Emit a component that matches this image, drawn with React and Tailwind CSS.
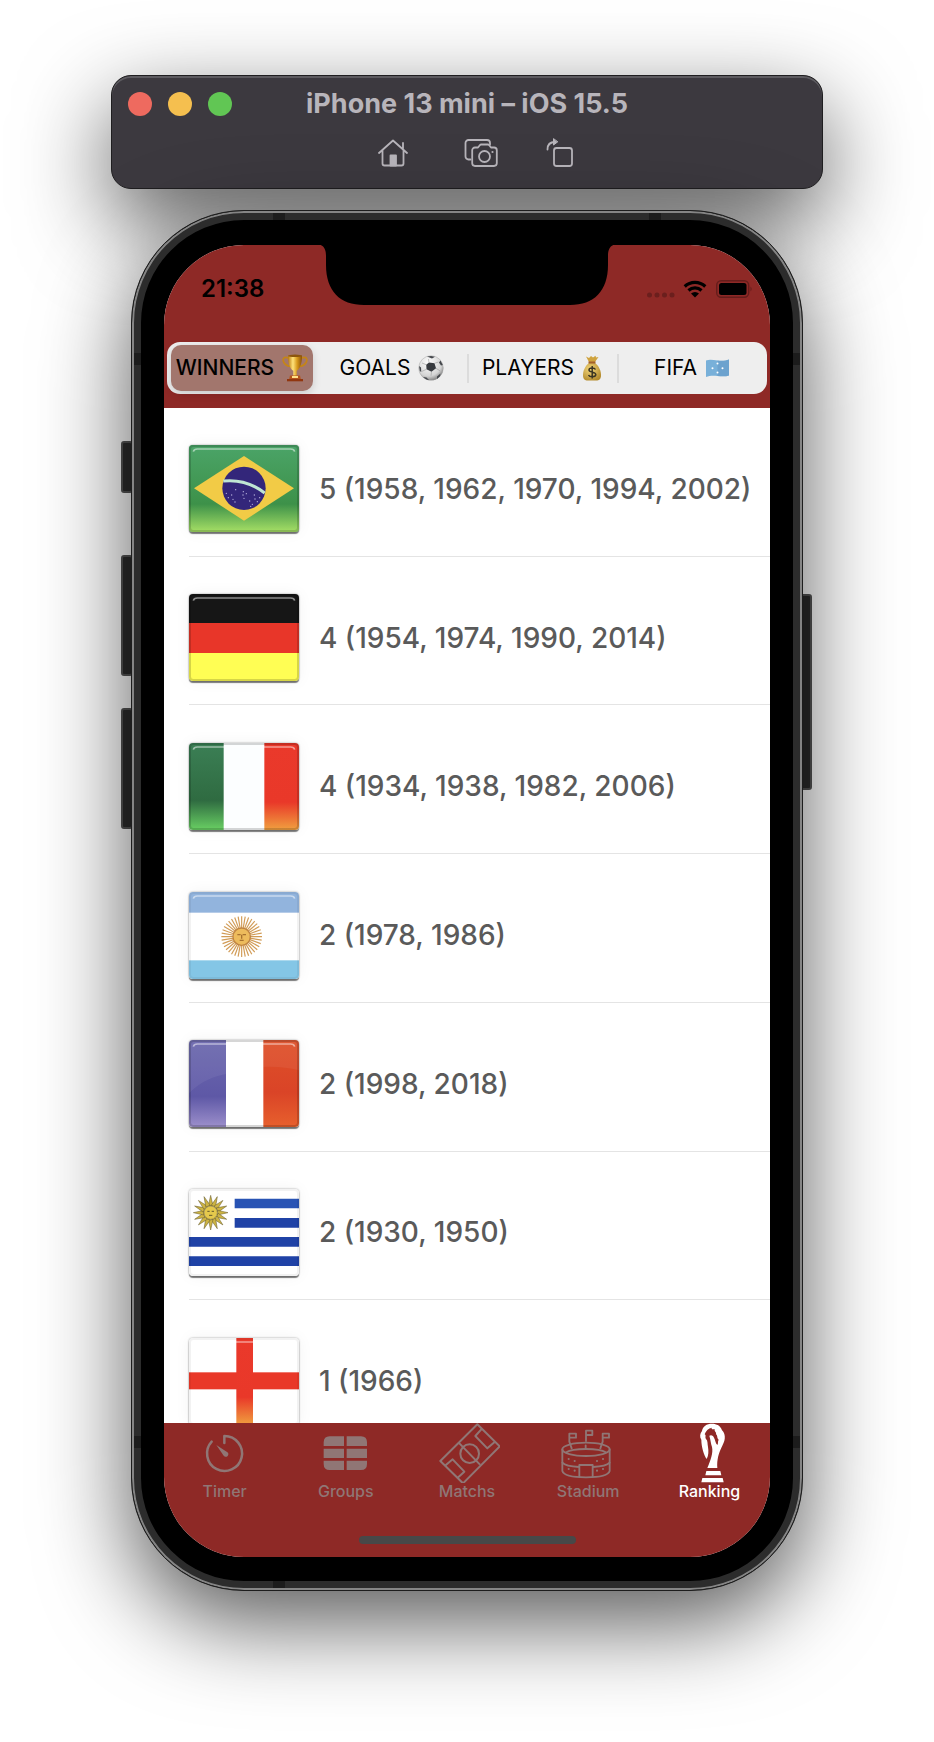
const FONT = "font-['Inter','Liberation_Sans',sans-serif]";

const HomeIcon = () => (
  <svg viewBox="0 0 30 28" className="h-7 w-[30px]" fill="none" stroke="currentColor" strokeWidth="1.8" strokeLinecap="round" strokeLinejoin="round">
    <path d="M1 14 15 1.500 29 14M4.500 11v13.500a2 2 0 0 0 2 2h17a2 2 0 0 0 2-2V11M25 9.500V4" />
    <path d="M12.500 16.500h5.500v10h-5.500z" fill="currentColor" />
  </svg>
);

const ShotsIcon = () => (
  <svg viewBox="0 0 34 28" className="h-7 w-[34px]" fill="none" stroke="currentColor" strokeWidth="1.8" strokeLinejoin="round" strokeLinecap="round">
    <path d="M6.500 20.500H4.500a3 3 0 0 1-3-3V4a3 3 0 0 1 3-3h18.500a3 3 0 0 1 3 3v1.500" />
    <path d="M11 8.500h3l1.800-2.300c.4-.5.700-.7 1.400-.7h6.600c.7 0 1 .2 1.400.7L27 8.500h3a2.800 2.800 0 0 1 2.800 2.800v13a2.800 2.800 0 0 1-2.800 2.700H11a2.800 2.800 0 0 1-2.800-2.700v-13A2.800 2.800 0 0 1 11 8.500Z" />
    <circle cx="20.500" cy="17.500" r="5.500" />
    <circle cx="28.500" cy="13" r="1.100" fill="currentColor" stroke="none" />
  </svg>
);

const RotateIcon = () => (
  <svg viewBox="0 0 28 30" className="h-[30px] w-7" fill="none" stroke="currentColor" strokeWidth="1.800" strokeLinejoin="round" strokeLinecap="round">
    <rect x="8" y="10" width="18" height="18" rx="2.500" />
    <path d="M1.500 11.500C1.500 6.500 4 4 9 4" />
    <path d="M7.500 1v6L11.500 4z" fill="currentColor" strokeWidth="1" />
  </svg>
);

const Trophy = () => (
  <svg viewBox="0 0 26 28" className="h-7 w-[26px]" aria-hidden="true">
    <defs>
      <linearGradient id="gold" x1="0" x2="1">
        <stop offset="0" stopColor="#b9770d" />
        <stop offset=".35" stopColor="#ffe27a" />
        <stop offset=".65" stopColor="#d89a1c" />
        <stop offset="1" stopColor="#8a4f08" />
      </linearGradient>
    </defs>
    <path d="M7 4.500C3 2 .8 4 1.200 6.500 1.700 9.800 5 12 9 12.500M19 4.500c4-2.500 6.200-.5 5.800 2-.5 3.300-3.800 5.500-7.800 6" fill="none" stroke="#c48518" strokeWidth="1.700" />
    <path d="M6 1.500h14c0 8-2 13.500-5.300 15.300V22h-3.400v-5.200C8 15 6 9.500 6 1.500Z" fill="url(#gold)" />
    <ellipse cx="13" cy="1.800" rx="7" ry="1.200" fill="#8d560d" />
    <path d="M8 21.500h10l.8 3.500H7.200z" fill="#b5541a" />
    <path d="M10 22h6v2h-6z" fill="#ffe08a" />
    <path d="M5 25h16v2.300H5z" fill="#91360f" />
  </svg>
);

const Ball = () => (
  <svg viewBox="0 0 26 28" className="h-7 w-[26px]" aria-hidden="true">
    <defs>
      <radialGradient id="ball" cx=".4" cy=".3" r=".75">
        <stop offset="0" stopColor="#fff" />
        <stop offset=".7" stopColor="#d4d4d4" />
        <stop offset="1" stopColor="#777" />
      </radialGradient>
    </defs>
    <circle cx="13" cy="14" r="12.300" fill="url(#ball)" stroke="#999" strokeWidth=".4" />
    <path d="m11 8.500 5.500.8 1.500 5-4.500 3.500-5-2.500-.3-4.600z" fill="#383b40" />
    <path d="M9 2.500 13 2l4 .8-3 1.700zM22.500 6.500l2.300 4.500-1.800.5-2-3zM1 12l2 1.500.3 4.500-1.500-1zM5 23l3.500.5 2.500 2.500c-2.500 0-4.500-1.500-6-3zM19 22.500l3.500-3-.5 2.800-3 2.700z" fill="#44474c" />
    <path d="M11 8.500 10.500 5M16.500 9.300 20.500 8M18 14.300l4 2.500M13.500 17.800l-.5 4M8.500 15.300l-4.500 2M8.200 10.700 4 9" stroke="#9a9a9a" strokeWidth=".6" />
  </svg>
);

const MoneyBag = () => (
  <svg viewBox="0 0 20 28" className="h-7 w-5" aria-hidden="true">
    <defs>
      <radialGradient id="bag" cx=".4" cy=".35" r=".7">
        <stop offset="0" stopColor="#f3d77c" />
        <stop offset="1" stopColor="#b38a2c" />
      </radialGradient>
    </defs>
    <path d="M4 2.500 7 4l2-2 2 1.500 2.500-1.700.5 1.700 2.500-.5-3.500 5H7z" fill="#cfa33e" />
    <path d="M7 9h6c4 3 6 8 6 12 0 4-1.500 5.500-5 5.500H6c-3.500 0-5-1.500-5-5.500 0-4 2-9 6-12Z" fill="url(#bag)" />
    <path d="M6.500 7.500h7v2h-7z" fill="#a3602a" />
    <path d="M13.500 15.500C12.500 13.500 7 13.200 7 16c0 2.700 6.800 1.500 6.800 4.500 0 3-6.300 2.800-7.300.5M10.200 12v12.500" fill="none" stroke="#3b3524" strokeWidth="1.500" />
  </svg>
);

const FifaFlag = () => (
  <svg viewBox="0 0 25 28" className="h-7 w-[25px]" aria-hidden="true">
    <path d="M1 6.500c4-1.500 7.500-.3 11.500 0 4 .5 8 .5 11.500-1v16c-3.500 1.200-7.500.8-11.500.5-4-.5-8-.5-11.500 1z" fill="#78b0d9" />
    <path d="M12.500 6.500c4 .5 8 .5 11.500-1v16c-3.500 1.200-7.500.8-11.500.5z" fill="#649ac6" opacity=".6" />
    <g fill="#fff">
      <circle cx="12.500" cy="9.500" r="1" />
      <circle cx="12.500" cy="18.500" r="1" />
      <circle cx="7.500" cy="14.300" r="1" />
      <circle cx="17.500" cy="14.300" r="1" />
    </g>
  </svg>
);

const rays = (n) => Array.from({ length: n }, (_, i) => (i * 360) / n);

const Brazil = () => (
  <>
    <rect width="330" height="261" fill="#46a063" />
    <rect width="330" height="261" fill="url(#limeGlow)" />
    <path d="M15 130 165 33l150 97-150 97z" fill="#f2cb46" />
    <circle cx="165" cy="130" r="65" fill="#33267a" />
    <path d="M103 108c45-5 88 8 124 36" fill="none" stroke="#bfe5d3" strokeWidth="9" />
    <g fill="#b9b4de">
      {[[112, 145], [118, 158], [128, 150], [140, 134], [132, 163], [138, 171], [163, 140], [172, 146], [162, 150], [165, 160], [182, 168], [190, 178], [198, 162], [205, 170], [212, 158], [196, 150], [185, 184]].map(([x, y]) => (
        <circle key={`${x}-${y}`} cx={x} cy={y} r="2" />
      ))}
    </g>
  </>
);

const Germany = () => (
  <>
    <rect width="330" height="87" fill="#161616" />
    <rect y="87" width="330" height="90" fill="#e83629" />
    <rect y="177" width="330" height="84" fill="#fffe54" />
  </>
);

const Italy = () => (
  <>
    <rect width="330" height="261" fill="#fcfeff" />
    <rect width="104" height="261" fill="url(#italyGreen)" />
    <rect x="226" width="104" height="261" fill="url(#redGlow)" />
  </>
);

const Argentina = () => (
  <>
    <rect width="330" height="261" fill="#fff" />
    <rect width="330" height="62" fill="#92b4dd" />
    <rect y="205" width="330" height="56" fill="#84c6e6" />
    <g stroke="#d19b55" strokeWidth="3.500">
      {rays(36).map((a) => (
        <path key={a} d="M158 110V73" transform={`rotate(${a} 158 134)`} />
      ))}
    </g>
    <circle cx="158" cy="134" r="26" fill="#edbb5c" stroke="#c08442" strokeWidth="4" />
    <path d="M145 128h10M161 128h10M158 128v12M152 145h12" stroke="#a8722f" strokeWidth="4" />
  </>
);

const France = () => (
  <>
    <rect width="330" height="261" fill="#fff" />
    <rect width="111" height="261" fill="url(#frenchBlue)" />
    <rect x="223" width="107" height="261" fill="url(#frenchRed)" />
    <path d="M0 160C40 120 75 110 111 102V0H0zM223 81c40-2 75 2 107 10V0H223z" fill="#fff" opacity=".06" />
  </>
);

const Uruguay = () => (
  <>
    <rect width="330" height="261" fill="#fff" />
    <path d="M137 29h193v29H137z" fill="#2853b4" />
    <path d="M137 87h193v29H137zM0 144h330v29H0zM0 202h330v29H0z" fill="#1f42a6" />
    <g fill="#cdb443" stroke="#665b2c" strokeWidth="1.500">
      {rays(16).map((a) => (
        <path key={a} d="m58 50 7-31 7 31z" transform={`rotate(${a} 65 71)`} />
      ))}
      <circle cx="65" cy="71" r="20" fill="#e5c94c" />
    </g>
    <path d="M55 67h7M68 67h7M60 79h10" stroke="#665b2c" strokeWidth="3" />
  </>
);

const England = () => (
  <>
    <rect width="330" height="261" fill="#fff" />
    <rect y="103" width="330" height="51" fill="#e93829" />
    <rect x="142" width="50" height="261" fill="url(#redGlow)" />
  </>
);

function Flag({ name, art: Art, dark }) {
  return (
    <div className="h-[87px] w-[110px] shrink-0 overflow-hidden rounded shadow-[0_2px_1px_rgba(0,0,0,0.5),0_0_2px_rgba(0,0,0,0.4),0_0_16px_rgba(0,0,0,0.05)]">
      <svg viewBox="0 0 330 261" preserveAspectRatio="none" className="block h-full w-full" role="img" aria-label={name}>
        <Art />
        <rect x="1" y="1" width="328" height="259" rx="12" fill="none" stroke="#000" strokeOpacity={dark ? 0.16 : 0.05} strokeWidth="10" />
        <path d="M13 20q2-8 12-8h280q10 0 12 8" fill="none" stroke="#fff" strokeOpacity=".5" strokeWidth="5" />
      </svg>
    </div>
  );
}

function Gradients() {
  return (
    <svg className="absolute size-0" aria-hidden="true">
      <defs>
        <linearGradient id="limeGlow" x2="0" y2="1">
          <stop offset="0" stopColor="#4ba468" />
          <stop offset=".68" stopColor="#3d9149" />
          <stop offset="1" stopColor="#a6df65" />
        </linearGradient>
        <linearGradient id="italyGreen" x2="0" y2="1">
          <stop offset="0" stopColor="#3b7f55" />
          <stop offset=".66" stopColor="#2f6b41" />
          <stop offset="1" stopColor="#69cf63" />
        </linearGradient>
        <linearGradient id="redGlow" x2="0" y2="1">
          <stop offset="0" stopColor="#ea392b" />
          <stop offset=".68" stopColor="#e93829" />
          <stop offset="1" stopColor="#f0a03f" />
        </linearGradient>
        <linearGradient id="frenchBlue" x2="0" y2="1">
          <stop offset="0" stopColor="#6c68ae" />
          <stop offset=".65" stopColor="#5e58a6" />
          <stop offset="1" stopColor="#9c8fcb" />
        </linearGradient>
        <linearGradient id="frenchRed" x2="0" y2="1">
          <stop offset="0" stopColor="#de5029" />
          <stop offset=".6" stopColor="#da4427" />
          <stop offset="1" stopColor="#e7602d" />
        </linearGradient>
      </defs>
    </svg>
  );
}

const TimerIcon = () => (
  <g fill="none" stroke="currentColor" strokeWidth="7.500" strokeLinecap="round" strokeLinejoin="round">
    <path d="M97 60V39a52.500 52.500 0 1 1-38 17" />
    <path d="m73 66 31 20a8 8 0 1 1-10 11z" fill="currentColor" stroke="none" />
  </g>
);

const GroupsIcon = () => (
  <g fill="currentColor">
    <path d="M50 40h43v29H32V58q0-18 18-18ZM101 40h43q18 0 18 18v11h-61zM32 77h61v28H32zM101 77h61v28h-61zM32 113h61v28H50q-18 0-18-18zM101 113h61v10q0 18-18 18h-43z" />
  </g>
);

const PitchIcon = () => (
  <g fill="none" stroke="currentColor" strokeWidth="6" strokeLinejoin="round">
    <path d="M130 4 197 70 87 181 19 114zM74 59l64 66" />
    <circle cx="107" cy="92" r="28" />
    <path d="m33 128 23-19 35 37-20 18M144 17l-20 22 36 37 22-19" />
  </g>
);

const StadiumIcon = () => (
  <g fill="none" stroke="currentColor" strokeWidth="5.500" strokeLinejoin="round" strokeLinecap="round">
    <ellipse cx="93" cy="79" rx="71" ry="20" />
    <path d="M22 79v65c4 13 28 19 71 19s67-6 71-19V79M34 88c10-7 32-10 59-10s49 3 59 10" />
    <path d="M22 119c8 9 28 12 50 13M164 119c-8 9-28 12-50 13M73 162v-36h40v36" />
    <path d="m50 76-7-20V32h20v12H44M92 76v-9M93 54V23h19v13H94M136 76l7-20V32h19v12h-18" />
    <g fill="currentColor" stroke="none">
      {[[41, 108], [59, 114], [41, 138], [59, 143], [126, 114], [144, 108], [126, 143], [144, 138]].map(([x, y]) => (
        <circle key={`${x}-${y}`} cx={x} cy={y} r="3.200" />
      ))}
    </g>
  </g>
);

const RankingIcon = () => (
  <g fill="currentColor">
    <path d="M108 2C92 2 80 10 78 24c-6 8-8 18-2 26 0 22 8 46 16 58 6-10 6-24 4-36-2-10 0-18-6-24-4-6 2-10-4-14 4-10 10-18 22-20-4 4 2 6 8 4-2 8 6 8 4 16 6 4 2 12 8 16-4 6 0 10-4 16-6-6-6-16-10-22-2-6-8-10-14-6 4 12 4 22 8 34 4 18-4 40-14 63h30c-2-25 4-45 16-69 10-16 8-36-2-44-4-14-16-20-30-20Z" />
    <path d="M91 144h42l3 13H88zM79 165h61l3 13H76z" />
  </g>
);

const segments = [
  { label: 'WINNERS', icon: Trophy },
  { label: 'GOALS', icon: Ball },
  { label: 'PLAYERS', icon: MoneyBag },
  { label: 'FIFA', icon: FifaFlag },
];

const winners = [
  { name: 'Brazil', art: Brazil, dark: true, text: '5 (1958, 1962, 1970, 1994, 2002)' },
  { name: 'Germany', art: Germany, dark: true, text: '4 (1954, 1974, 1990, 2014)' },
  { name: 'Italy', art: Italy, dark: true, text: '4 (1934, 1938, 1982, 2006)' },
  { name: 'Argentina', art: Argentina, text: '2 (1978, 1986)' },
  { name: 'France', art: France, dark: true, text: '2 (1998, 2018)' },
  { name: 'Uruguay', art: Uruguay, text: '2 (1930, 1950)' },
  { name: 'England', art: England, text: '1 (1966)' },
];

const tabs = [
  { label: 'Timer', icon: TimerIcon },
  { label: 'Groups', icon: GroupsIcon },
  { label: 'Matchs', icon: PitchIcon },
  { label: 'Stadium', icon: StadiumIcon },
  { label: 'Ranking', icon: RankingIcon, active: true },
];

function Toolbar() {
  return (
    <header className="w-full max-w-[712px] rounded-[20px] border border-[#1f1e20] bg-[#3c393f] px-4 pt-[11px] pb-5 text-[#b8b5bb] shadow-[inset_0_2px_0_#5d5b60,0_32px_90px_rgba(0,0,0,0.65)]">
      <div className="grid grid-cols-[1fr_auto_1fr] items-center">
        <div className="flex gap-4">
          <button aria-label="Close" className="size-6 rounded-full bg-[#ee6a5f]" />
          <button aria-label="Minimize" className="size-6 rounded-full bg-[#f5bf4f]" />
          <button aria-label="Zoom" className="size-6 rounded-full bg-[#61c654]" />
        </div>
        <h1 className="text-[27px] leading-[34px] font-bold">iPhone 13 mini – iOS 15.5</h1>
      </div>
      <div className="mt-[17px] flex items-center justify-center gap-12 pl-[18px]">
        <button aria-label="Home" className="mr-2"><HomeIcon /></button>
        <button aria-label="Screenshot"><ShotsIcon /></button>
        <button aria-label="Rotate"><RotateIcon /></button>
      </div>
    </header>
  );
}

function StatusBar() {
  return (
    <div className="flex h-[88px] items-center justify-between pr-[17px] pl-[37px] text-black">
      <span className="text-2xl font-semibold">21:38</span>
      <div className="flex items-center">
        <svg viewBox="0 0 28 6" className="mt-3 mr-2 h-1.5 w-7" fill="#6b1f1d">
          {[2.500, 10, 17.500, 25].map((x) => <circle key={x} cx={x} cy="3" r="2.500" />)}
        </svg>
        <svg viewBox="0 0 24 18" className="mr-[9px] h-[18px] w-6">
          <path d="M1.700 6.500a15 15 0 0 1 20.600 0M5.500 10.500a9.500 9.500 0 0 1 13 0" fill="none" stroke="#000" strokeWidth="3.200" />
          <path d="M12 17.500 8 13.600a6 6 0 0 1 8 0z" />
        </svg>
        <svg viewBox="0 0 37 18" className="h-[18px] w-[37px]">
          <rect x=".7" y=".7" width="32" height="16.600" rx="4.500" fill="none" stroke="#651d1b" strokeWidth="1.400" />
          <rect x="3" y="3" width="27.500" height="12" rx="2.500" />
          <path d="M34.500 6.500q2.300 2.500 0 5z" fill="#651d1b" />
        </svg>
      </div>
    </div>
  );
}

function Segmented() {
  return (
    <div className="mx-[3px] mt-[9px] flex h-[52px] rounded-[13px] bg-[#eee]">
      {segments.map(({ label, icon: Icon }, i) => (
        <div key={label} className="flex flex-1 items-center">
          {i > 1 && <span className="-mr-0.5 h-[29px] w-0.5 bg-[#dcdcdc]" />}
          <button
            className={`flex h-[46px] flex-1 items-center justify-center gap-2 rounded-[10px] text-[21px] whitespace-nowrap ${
              i === 0 ? 'mr-1 ml-1 bg-[#a2766d] font-medium shadow-[0_3px_8px_rgba(0,0,0,0.15)]' : ''
            }`}
          >
            {label}
            <Icon />
          </button>
        </div>
      ))}
    </div>
  );
}

function TabBar() {
  return (
    <nav className="flex h-[134px] flex-col justify-between bg-[#8e2926] pb-[13px]">
      <div className="flex">
        {tabs.map(({ label, icon: Icon, active }) => (
          <a key={label} href="#" className={`flex flex-1 flex-col items-center ${active ? 'text-white' : 'text-[#907675]'}`}>
            <svg viewBox="0 0 198 180" className="h-[60px] w-[66px]" aria-hidden="true"><Icon /></svg>
            <span className="text-base leading-4 font-medium">{label}</span>
          </a>
        ))}
      </div>
      <div className="h-2 w-[217px] self-center rounded-full bg-[#484848]" />
    </nav>
  );
}

function Phone() {
  return (
    <div className="relative w-full max-w-[672px]">
      <span className="absolute top-[231px] -left-[10px] h-[52px] w-3 rounded-[3px] border-2 border-[#555] bg-[#2c2c2c]" />
      <span className="absolute top-[345px] -left-[10px] h-[121px] w-3 rounded-[3px] border-2 border-[#555] bg-[#2c2c2c]" />
      <span className="absolute top-[498px] -left-[10px] h-[121px] w-3 rounded-[3px] border-2 border-[#555] bg-[#2c2c2c]" />
      <span className="absolute top-[384px] -right-[9px] h-[196px] w-3 rounded-[3px] border-2 border-[#555] bg-[#2c2c2c]" />
      <div className="relative rounded-[113px] border border-[#1d1d1d] bg-black p-[32px] pt-[34px] pb-[33px] shadow-[inset_0_0_0_2px_#858585,inset_0_0_0_9px_#2c2c2c,0_32px_90px_rgba(0,0,0,0.65)]">
        <span className="absolute top-[2px] left-[141px] h-[7px] w-3 bg-[#1c1c1c]" />
        <span className="absolute top-[2px] right-[141px] h-[7px] w-3 bg-[#1c1c1c]" />
        <span className="absolute top-[142px] left-[2px] h-3 w-[7px] bg-[#1c1c1c]" />
        <span className="absolute top-[142px] right-[2px] h-3 w-[7px] bg-[#1c1c1c]" />
        <span className="absolute bottom-[142px] left-[2px] h-3 w-[7px] bg-[#1c1c1c]" />
        <span className="absolute right-[2px] bottom-[142px] h-3 w-[7px] bg-[#1c1c1c]" />
        <span className="absolute bottom-[2px] left-[141px] h-[7px] w-3 bg-[#1c1c1c]" />
        <main className="relative overflow-hidden rounded-[80px] bg-white">
          <div className="bg-[#8e2926] pb-3.5">
            <svg viewBox="0 0 304 61" className="absolute top-0 left-1/2 h-[61px] w-[304px] -translate-x-1/2" aria-hidden="true">
              <path d="M0-1c8 0 11 4 11 12v9c0 26 14 40 38 40h206c24 0 38-14 38-40v-9c0-8 3-12 11-12z" />
            </svg>
            <StatusBar />
            <Segmented />
          </div>
          <div className="h-[1015px] overflow-hidden">
            <ul className="flex h-[1041px] flex-col pl-[25px]">
              {winners.map(({ name, art, dark, text }) => (
                <li key={name} className="flex flex-1 items-center gap-5 border-b border-[#e4e4e4] pt-3.5">
                  <Flag name={name} art={art} dark={dark} />
                  <span className="text-[28px] font-medium whitespace-nowrap text-[#5a5a5a]">{text}</span>
                </li>
              ))}
            </ul>
          </div>
          <TabBar />
        </main>
      </div>
    </div>
  );
}

export default function App() {
  return (
    <div className={`flex min-h-screen flex-col items-center gap-[21px] overflow-hidden bg-white pt-[75px] pb-[148px] ${FONT}`}>
      <Gradients />
      <Toolbar />
      <Phone />
    </div>
  );
}
